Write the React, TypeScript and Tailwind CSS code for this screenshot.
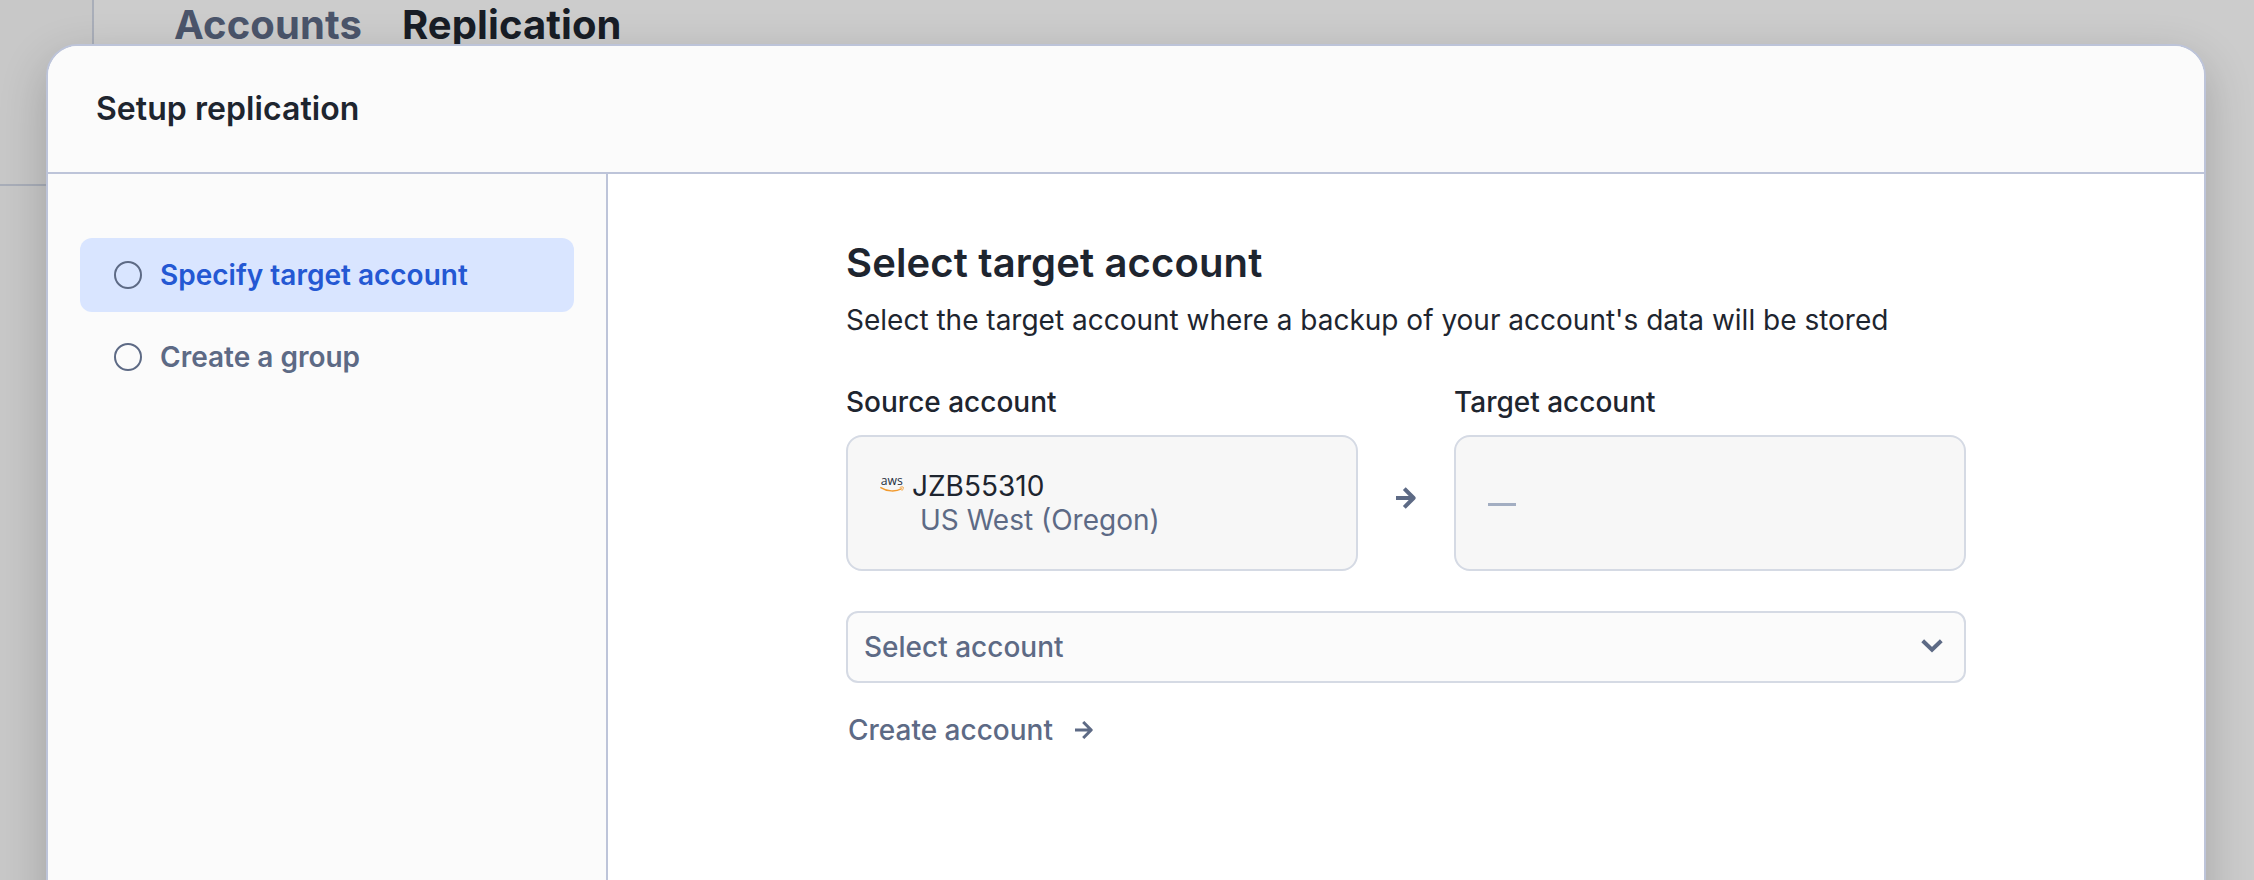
import type { ReactNode } from "react";

function StepItem({ label, active = false }: { label: string; active?: boolean }) {
  return (
    <li
      className={
        active
          ? "flex h-[74px] items-center gap-[18px] rounded-xl bg-[#d9e5ff] pl-[34px] text-[#2458d3]"
          : "flex h-[74px] items-center gap-[18px] rounded-xl pl-[34px] text-[#5d6a85]"
      }
    >
      <span className="size-7 shrink-0 rounded-full border-2 border-[#5d6a85]" />
      <span className="text-[28px] leading-10 font-semibold whitespace-nowrap">{label}</span>
    </li>
  );
}

function AwsLogo() {
  return (
    <svg width="24" height="16" viewBox="0 0 24 16" className="mt-[39px] shrink-0 overflow-visible" aria-label="aws">
      <text x="0.8" y="9" fontSize="13" fontWeight="500" fontFamily="Open Sans, sans-serif" fill="#252f3e" textLength="22" lengthAdjust="spacingAndGlyphs">
        aws
      </text>
      <path d="M0.8 11.6C7 15.6 15.5 16 21.3 12.9" fill="none" stroke="#f29a2e" strokeWidth="1.4" strokeLinecap="round" />
      <path d="M20 11.4c1.2-.7 3.1-.6 3.3-.2.2.4-.1 2.2-1.2 3.3" fill="none" stroke="#f29a2e" strokeWidth="0.9" strokeLinecap="round" />
    </svg>
  );
}

function AccountCard({ title, children }: { title: string; children: ReactNode }) {
  return (
    <section className="w-[512px]">
      <h2 className="text-[28px] leading-10 font-medium text-[#1e252f]">{title}</h2>
      <div className="mt-[13px] flex h-[136px] rounded-2xl border-2 border-[#d5dae4] bg-[#f7f7f7] pl-8">
        {children}
      </div>
    </section>
  );
}

export default function App() {
  return (
    <div className="relative h-[880px] w-[2254px] overflow-hidden bg-[#cccccc] font-['Inter',sans-serif]">
      <div className="flex h-full">
        <aside className="w-[94px] border-r-2 border-[#a9aeb9] bg-[#c8c8c8]">
          <div className="h-[186px] border-b-2 border-[#a9aeb9]" />
        </aside>
        <nav className="flex h-[50px] gap-10 pl-[80px] text-[40px] leading-[50px] font-bold tracking-[0.1px]">
          <span className="text-[#4b556b]">Accounts</span>
          <span className="text-[#181d26]">Replication</span>
        </nav>
      </div>

      <div
        role="dialog"
        className="absolute top-[44px] left-[46px] flex h-[900px] w-[2160px] flex-col overflow-hidden rounded-[32px] border-2 border-[#bdc4d9] bg-white shadow-[0_16px_48px_rgba(0,0,0,0.2)]"
      >
        <header className="flex h-[128px] shrink-0 items-center border-b-2 border-[#bdc4d9] bg-[#fbfbfb] pl-12">
          <h1 className="text-[32px] leading-10 font-semibold tracking-[0.06px] text-[#1e252f]">Setup replication</h1>
        </header>
        <div className="flex grow">
          <ul className="flex w-[560px] shrink-0 flex-col gap-2 border-r-2 border-[#bdc4d9] bg-[#fbfbfb] pt-16 pr-8 pl-8">
            <StepItem label="Specify target account" active />
            <StepItem label="Create a group" />
          </ul>
          <main className="ml-[238px] w-[1120px] pt-16">
            <h1 className="text-[40px] leading-[50px] font-semibold tracking-[0.14px] text-[#1e252f]">Select target account</h1>
            <p className="mt-3 text-[28px] leading-10 whitespace-nowrap text-[#1e252f]">
              Select the target account where a backup of your account's data will be stored
            </p>
            <div className="mt-[42px] flex">
              <AccountCard title="Source account">
                <AwsLogo />
                <div className="ml-2 pt-8 text-[28px] leading-[34px] whitespace-nowrap">
                  <p className="text-[#1e252f]">JZB55310</p>
                  <p className="pl-2 text-[#5d6a85]">US West (Oregon)</p>
                </div>
              </AccountCard>
              <div className="flex w-24 justify-center pt-[105px]">
                <svg width="20" height="22" viewBox="0 0 20 22" fill="none" stroke="#5d6a85" strokeWidth="4">
                  <path d="M0 11H18M8.3 1.6L17.6 11L8.3 20.4" strokeLinejoin="round" />
                </svg>
              </div>
              <AccountCard title="Target account">
                <div className="mt-[66px] h-[3px] w-7 bg-[#a3aec2]" />
              </AccountCard>
            </div>
            <button className="mt-10 flex h-[72px] w-full items-center justify-between rounded-xl border-2 border-[#d5dae4] bg-[#fbfbfb] pr-[21px] pl-4 text-[28px] font-medium text-[#5d6a85]">
              <span>Select account</span>
              <svg width="22" height="14" viewBox="0 0 22 14" fill="none" stroke="#5d6a85" strokeWidth="4" className="mb-[3px]">
                <path d="M1.7 1.8L11 10.8L20.3 1.8" />
              </svg>
            </button>
            <a className="mt-[27px] ml-[2px] flex items-center gap-[22px] text-[28px] leading-10 font-medium text-[#5d6a85]">
              <span>Create account</span>
              <svg width="18" height="18" viewBox="0 0 18 18" fill="none" stroke="#5d6a85" strokeWidth="3">
                <path d="M0 9H16M8.2 1L16.2 9L8.2 17" strokeLinejoin="round" />
              </svg>
            </a>
          </main>
        </div>
      </div>
    </div>
  );
}
